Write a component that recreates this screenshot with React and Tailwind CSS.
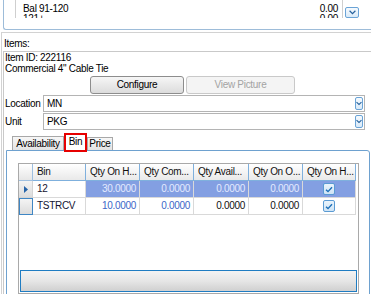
import React from 'react';

const font = "font-['Liberation_Sans',Arial,sans-serif] text-[10px] tracking-[-0.3px] leading-none";

function Chevron() {
  return (
    <svg width="7" height="5" viewBox="0 0 7 5">
      <path d="M0.6 0.8 L3.5 3.6 L6.4 0.8" stroke="#24609c" fill="none" strokeWidth="1.2" />
    </svg>
  );
}

function DropBtn({ className = '' }) {
  return (
    <div className={`flex items-center justify-center border border-[#6aa3d6] rounded-[2px] bg-gradient-to-b from-[#f6fafe] to-[#d9eaf8] ${className}`}>
      <Chevron />
    </div>
  );
}

function Select({ value }) {
  return (
    <div className="flex-1 h-[17px] border border-[#b4b4b4] bg-white flex items-center pl-[3px] pr-[1px]">
      <span className="flex-1">{value}</span>
      <DropBtn className="w-[8px] h-[13px]" />
    </div>
  );
}

function Check() {
  return (
    <div className="w-[12px] h-[12px] border border-[#5b9bd3] rounded-[2px] bg-gradient-to-b from-[#eaf4fc] to-[#cfe4f5] flex items-center justify-center">
      <svg width="8" height="7" viewBox="0 0 8 7">
        <path d="M1 3.8 L3 5.6 L7 1.2" stroke="#1b6fb8" fill="none" strokeWidth="1.4" />
      </svg>
    </div>
  );
}

const cols = [
  { name: 'Bin', w: 'w-[53px]' },
  { name: 'Qty On H...', w: 'w-[54px]' },
  { name: 'Qty Com...', w: 'w-[54px]' },
  { name: 'Qty Avail...', w: 'w-[55px]' },
  { name: 'Qty On O...', w: 'w-[54px]' },
  { name: 'Qty On H...', w: 'w-[53px]' },
];

const rows = [
  { bin: '12', onh: '30.0000', com: '0.0000', avail: '0.0000', ono: '0.0000', sel: true },
  { bin: 'TSTRCV', onh: '10.0000', com: '0.0000', avail: '0.0000', ono: '0.0000', sel: false },
];

function Grid() {
  return (
    <div className="h-[131px] w-[341px] border border-[#a9a9a9] bg-white flex flex-col">
      <div className="flex h-[17px]">
        <div className="w-[14px] border-r border-b border-[#9ebfe0] bg-gradient-to-b from-white to-[#e6e6e6]" />
        {cols.map((c, i) => (
          <div key={i} className={`${c.w} border-r border-b border-[#7fb0dd] bg-gradient-to-b from-white to-[#e9e9e9] flex items-center pl-[4px] text-[#111]`}>
            {c.name}
          </div>
        ))}
      </div>
      {rows.map((r, i) => (
        <div key={i} className="flex h-[17px]">
          <div className={`w-[14px] flex items-center justify-center bg-gradient-to-b from-[#f4f4f4] to-[#dcdcdc] ${r.sel ? 'border-r border-b border-[#d4d4d4]' : 'border border-[#3f86c4]'}`}>
            {r.sel && (
              <svg width="4" height="7" viewBox="0 0 4 7"><path d="M0 0 L4 3.5 L0 7 Z" fill="#2563a8" /></svg>
            )}
          </div>
          <div className="w-[53px] border-r border-b border-[#d9d9d9] flex items-center pl-[4px] text-[#141432]">{r.bin}</div>
          <div className={`w-[54px] border-r border-b border-[#d9d9d9] flex items-center justify-end pr-[3px] ${r.sel ? 'bg-[#839fe2] text-[#e4eaff]' : 'text-[#3b66c8]'}`}>{r.onh}</div>
          <div className={`w-[54px] border-r border-b border-[#d9d9d9] flex items-center justify-end pr-[3px] ${r.sel ? 'bg-[#839fe2] text-[#e4eaff]' : 'text-[#3b66c8]'}`}>{r.com}</div>
          <div className={`w-[55px] border-r border-b border-[#d9d9d9] flex items-center justify-end pr-[3px] ${r.sel ? 'bg-[#839fe2] text-[#e4eaff]' : 'text-[#111]'}`}>{r.avail}</div>
          <div className={`w-[54px] border-r border-b border-[#d9d9d9] flex items-center justify-end pr-[3px] ${r.sel ? 'bg-[#839fe2] text-[#e4eaff]' : 'text-[#111]'}`}>{r.ono}</div>
          <div className={`w-[53px] border-r border-b border-[#d9d9d9] flex items-center justify-center ${r.sel ? 'bg-[#839fe2]' : ''}`}>
            <Check />
          </div>
        </div>
      ))}
      <div className="flex-1" />
      <div className="mx-[1px] mb-[1px] h-[22px] border border-[#1f7cc2] bg-gradient-to-b from-[#f3f3f3] via-[#e6e6e6] to-[#d0d0d0]" />
    </div>
  );
}

export default function App() {
  return (
    <div className={`w-[371px] h-[294px] overflow-hidden bg-white text-black ${font}`}>
      {/* balances list */}
      <div className="ml-[3px] w-[380px] h-[30px] border-l border-b border-[#9dbcd9] rounded-bl-[3px] overflow-hidden">
        <div className="flex h-[18px]">
          <div className="w-[11px]" />
          <div className="w-[328px] border-x border-[#cfcfcf] bg-white overflow-hidden">
            <div className="flex justify-between items-center h-[14px] pt-[4px] pl-[7px] pr-[4px]">
              <span>Bal 91-120</span>
              <span>0.00</span>
            </div>
            <div className="flex justify-between items-start h-[4px] overflow-hidden pl-[7px] pr-[4px]">
              <span>121+</span>
              <span>0.00</span>
            </div>
          </div>
          <DropBtn className="ml-[2px] mt-[7px] w-[14px] h-[11px]" />
        </div>
      </div>

      {/* items group */}
      <div className="mt-[2px] ml-[1px] h-[270px] border-t border-l border-[#d2d2d2]">
        <div className="pl-[2px] pt-[6px] h-[18px]">Items:</div>
        <div className="ml-[1px] border-t border-l border-[#c9c9c9] h-[260px]">
          <div className="pl-[1px] pt-[1px] h-[11px]">Item ID: 222116</div>
          <div className="pl-[1px] pt-[1px] h-[12px]">Commercial 4" Cable Tie</div>
          <div className="flex h-[18px] mt-[1px] ml-[86px] gap-[2px]">
            <div className="w-[94px] border border-[#8d8d8d] rounded-[3px] bg-gradient-to-b from-[#f6f6f6] to-[#dcdcdc] flex items-center justify-center">Configure</div>
            <div className="w-[109px] border border-[#c9c9c9] rounded-[3px] bg-[#f4f4f4] text-[#a3a3a3] flex items-center justify-center">View Picture</div>
          </div>

          <div className="flex items-center mt-[1px] h-[17px]">
            <span className="w-[39px] pl-[1px]">Location</span>
            <div className="w-[322px] flex"><Select value="MN" /></div>
          </div>
          <div className="flex items-center mt-[1px] h-[17px]">
            <span className="w-[39px] pl-[1px]">Unit</span>
            <div className="w-[322px] flex"><Select value="PKG" /></div>
          </div>

          {/* tabs */}
          <div className="flex items-end h-[20px] pl-[8px]">
            <div className="w-[52px] h-[14px] border border-b-0 border-[#a8a8a8] bg-gradient-to-b from-[#f7f7f7] to-[#e3e3e3] flex items-center justify-center">Availability</div>
            <div className="relative z-10 -mb-[2px] w-[23px] h-[19px] border-2 border-[#e60000] bg-white flex items-center justify-center pb-[2px]">Bin</div>
            <div className="w-[26px] h-[13px] border border-b-0 border-[#a8a8a8] bg-gradient-to-b from-[#f7f7f7] to-[#e3e3e3] flex items-center justify-center">Price</div>
          </div>
          <div className="ml-[2px] w-[364px] h-[150px] border border-[#6ea1cf] rounded-tr-[3px] pt-[12px] pl-[11px]">
            <Grid />
          </div>
        </div>
      </div>
    </div>
  );
}
